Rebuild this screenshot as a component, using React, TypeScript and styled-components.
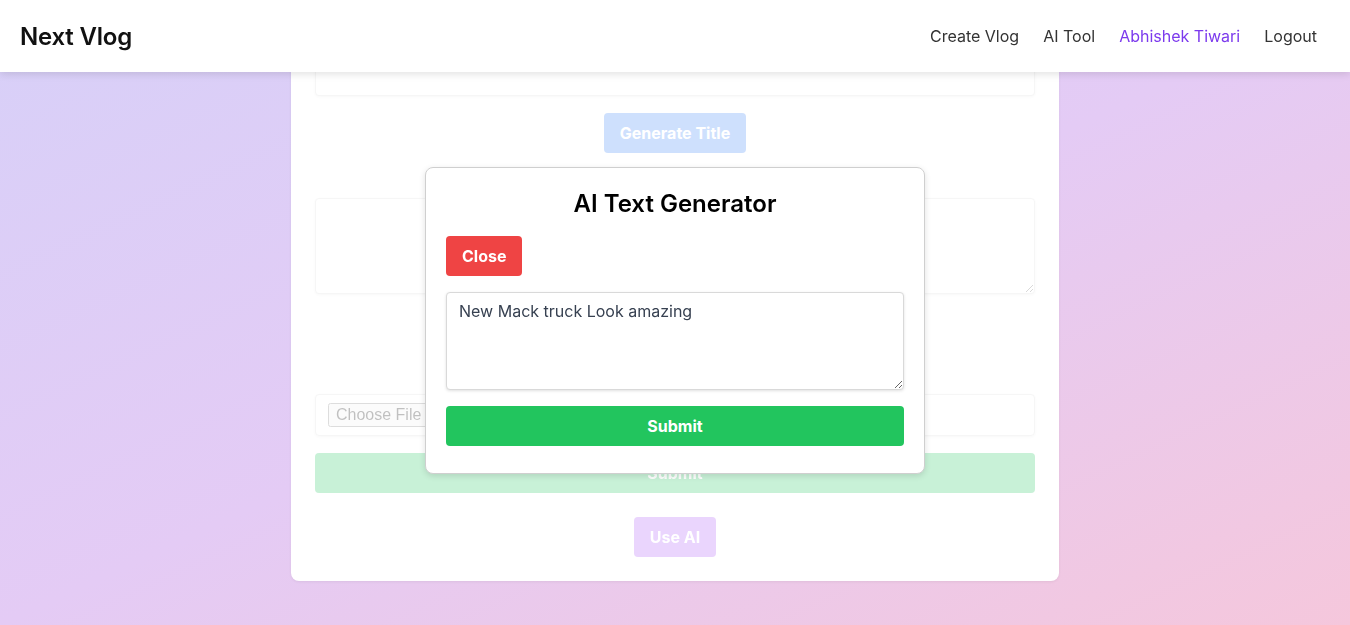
import React, { useEffect, useRef } from "react";
import styled, { createGlobalStyle } from "styled-components";

const GlobalStyle = createGlobalStyle`
  * { box-sizing: border-box; }
  html, body { margin: 0; padding: 0; }
  body {
    font-family: Inter, "Noto Sans", Arial, sans-serif;
    min-height: 100vh;
    background: linear-gradient(to bottom right, #d7d0f8 0%, #e4cbf5 50%, #f5c7dc 100%);
    background-attachment: fixed;
    overflow: hidden;
  }
`;

const Page = styled.div`
  min-height: 100vh;
`;

const Header = styled.header`
  position: fixed;
  top: 0;
  left: 0;
  right: 0;
  height: 72px;
  background: #ffffff;
  box-shadow: 0 2px 8px rgba(0, 0, 0, 0.12);
  display: flex;
  align-items: center;
  justify-content: space-between;
  padding: 0 33px 0 20px;
  z-index: 10;
`;

const Logo = styled.div`
  font-size: 24px;
  font-weight: 600;
  color: #111111;
  letter-spacing: -0.2px;
`;

const Nav = styled.nav`
  display: flex;
  align-items: center;
  gap: 24px;
`;

const NavLink = styled.a<{ $accent?: boolean }>`
  font-size: 16px;
  color: ${(p) => (p.$accent ? "#7c3aed" : "#333333")};
  text-decoration: none;
  cursor: pointer;
`;

const Main = styled.main`
  display: flex;
  justify-content: center;
  padding-top: 30px;
`;

const Card = styled.div`
  width: 768px;
  background: #ffffff;
  border-radius: 8px;
  padding: 24px 24px 24px;
  box-shadow: 0 1px 3px rgba(0, 0, 0, 0.06);
`;

const FadedForm = styled.form`
  opacity: 0.25;
  display: flex;
  flex-direction: column;
`;

const Group = styled.div<{ $mb?: number }>`
  display: flex;
  flex-direction: column;
  align-items: center;
  gap: 17px;
  margin-bottom: ${(p) => p.$mb ?? 0}px;
`;

const TextInput = styled.input`
  width: 100%;
  height: 42px;
  border: 1px solid #d9d9d9;
  border-radius: 4px;
  box-shadow: 0 1px 3px rgba(0, 0, 0, 0.12);
  padding: 8px 12px;
  font-family: inherit;
  font-size: 16px;
`;

const TextArea = styled.textarea<{ $h: number }>`
  width: 100%;
  height: ${(p) => p.$h}px;
  border: 1px solid #d9d9d9;
  border-radius: 4px;
  box-shadow: 0 1px 3px rgba(0, 0, 0, 0.12);
  padding: 6px 12px;
  font-family: inherit;
  font-size: 16px;
  line-height: 24px;
  color: #374151;
  caret-color: #111111;
  outline: none;
  display: block;
`;

const FileBox = styled.div`
  width: 100%;
  height: 42px;
  border: 1px solid #d9d9d9;
  border-radius: 4px;
  box-shadow: 0 1px 3px rgba(0, 0, 0, 0.12);
  padding: 0 12px;
  display: flex;
  align-items: center;
`;

const FileInput = styled.input`
  font-family: inherit;
  font-size: 16px;
  color: #333;
`;

const Button = styled.button<{ $bg: string; $full?: boolean }>`
  background: ${(p) => p.$bg};
  color: #ffffff;
  border: none;
  border-radius: 4px;
  height: 40px;
  padding: 0 16px;
  font-family: inherit;
  font-size: 16px;
  font-weight: 700;
  width: ${(p) => (p.$full ? "100%" : "auto")};
  cursor: pointer;
`;

const CenterRow = styled.div`
  display: flex;
  justify-content: center;
  margin-top: 24px;
`;

const Modal = styled.div`
  position: fixed;
  top: 167px;
  left: 50%;
  transform: translateX(-50%);
  width: 500px;
  background: #ffffff;
  border: 1px solid #cfcfcf;
  border-radius: 8px;
  box-shadow: 0 2px 6px rgba(0, 0, 0, 0.12);
  padding: 20px 20px 27px;
  display: flex;
  flex-direction: column;
  gap: 16px;
  z-index: 20;
`;

const ModalTitle = styled.h2`
  margin: 0;
  text-align: center;
  font-size: 24px;
  line-height: 32px;
  font-weight: 600;
  color: #000000;
`;

const Row = styled.div`
  display: flex;
`;

export default function App() {
  const ref = useRef<HTMLTextAreaElement>(null);
  useEffect(() => {
    const el = ref.current;
    if (el) {
      el.focus();
      const n = el.value.length;
      el.setSelectionRange(n, n);
    }
  }, []);

  return (
    <Page>
      <GlobalStyle />
      <Header>
        <Logo>Next Vlog</Logo>
        <Nav>
          <NavLink>Create Vlog</NavLink>
          <NavLink>AI Tool</NavLink>
          <NavLink $accent>Abhishek Tiwari</NavLink>
          <NavLink>Logout</NavLink>
        </Nav>
      </Header>
      <Main>
        <Card>
          <FadedForm onSubmit={(e) => e.preventDefault()}>
            <Group $mb={45}>
              <TextInput type="text" />
              <Button type="button" $bg="#3b82f6">Generate Title</Button>
            </Group>
            <Group $mb={43}>
              <TextArea $h={96} />
              <Button type="button" $bg="#3b82f6">Generate Description</Button>
            </Group>
            <Group>
              <FileBox>
                <FileInput type="file" />
              </FileBox>
              <Button type="submit" $bg="#22c55e" $full>Submit</Button>
            </Group>
            <CenterRow>
              <Button type="button" $bg="#a855f7">Use AI</Button>
            </CenterRow>
          </FadedForm>
        </Card>
      </Main>
      <Modal>
        <ModalTitle>AI Text Generator</ModalTitle>
        <Row>
          <Button type="button" $bg="#ef4444">Close</Button>
        </Row>
        <TextArea ref={ref} $h={98} defaultValue="New Mack truck Look amazing" />
        <Button type="button" $bg="#22c55e" $full>Submit</Button>
      </Modal>
    </Page>
  );
}
